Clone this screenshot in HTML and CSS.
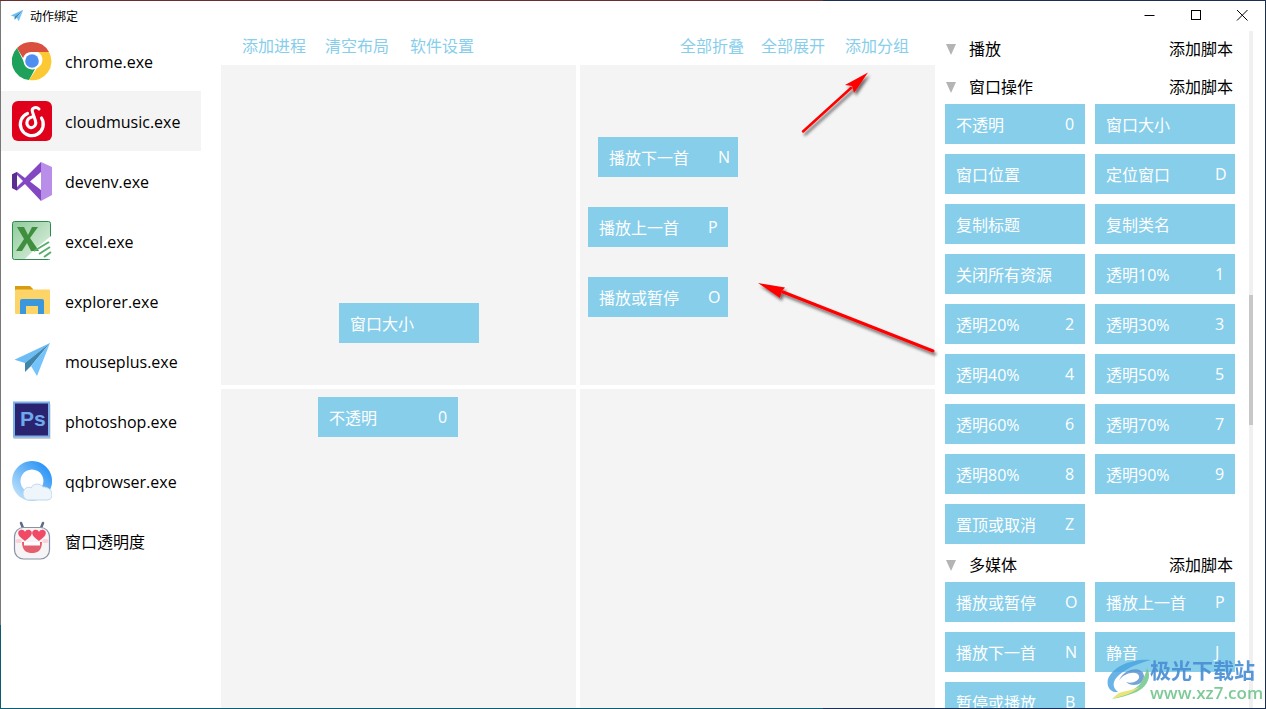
FILE: index.html
```html
<!DOCTYPE html>
<html lang="zh-CN">
  <head>
    <meta charset="UTF-8" />
    <title>动作绑定</title>
    <link rel="stylesheet" href="styles.css">
  </head>
  <body>
    <div class="window">
      <!-- Title bar -->
      <div class="titlebar">
        <div class="title">
          <svg class="title-icon" viewBox="0 0 40 40">
            <path d="M38 2 2.500 18.700 13 22z" fill="#6cbcf5" />
            <path d="M38 2 13 22v9l6-6z" fill="#3f86ad" />
            <path d="M38 2 19 25l6 10z" fill="#74c4fb" />
          </svg>
          <span>动作绑定</span>
        </div>
        <div class="controls">
          <svg class="ctl" viewBox="0 0 46 30"><path d="M17.500 15.500h10" /></svg>
          <svg class="ctl" viewBox="0 0 46 30"><rect x="18.500" y="10.500" width="9" height="9" /></svg>
          <svg class="ctl" viewBox="0 0 46 30"><path d="M18 10l10.500 10.500M28.500 10 18 20.500" /></svg>
        </div>
      </div>

      <div class="main">
        <!-- Process list -->
        <div class="sidebar">
          <div class="proc">
            <svg class="proc-icon" viewBox="0 0 40 40">
              <path d="M20 1a19 19 0 0 1 17 10H20a9 9 0 0 0-9 6L5 7A19 19 0 0 1 20 1z" fill="#d9503f" />
              <path d="M5 7l7 14a9 9 0 0 0 11 7l-6 11A19 19 0 0 1 5 7z" fill="#1ea15b" />
              <path d="M37 11a19 19 0 0 1-20 28l8-12a9 9 0 0 0 1-16z" fill="#fcc934" />
              <circle cx="20" cy="20" r="8.500" fill="#fff" />
              <circle cx="20" cy="20" r="6.800" fill="#4f8ff0" />
            </svg>
            <span>chrome.exe</span>
          </div>
          <div class="proc active">
            <svg class="proc-icon" viewBox="0 0 40 40">
              <rect width="40" height="40" rx="6" fill="#e0001b" />
              <path d="M15.500 12.500A11.500 11.500 0 1 0 29.500 17" fill="none" stroke="#fff" stroke-width="3.200" stroke-linecap="round" />
              <path d="M27 8c-3-3-8-1-6.500 3l3 9c1.500 5-3.500 8-6.500 6-4-3-2-9 3-10" fill="none" stroke="#fff" stroke-width="3" stroke-linecap="round" />
            </svg>
            <span>cloudmusic.exe</span>
          </div>
          <div class="proc">
            <svg class="proc-icon" viewBox="0 0 40 40">
              <path d="M29 1l11 5v28l-11 6z" fill="#b88ee8" />
              <path d="M29 1 13 17 5 11 0 13.500V27l5 2.500 8-6.500 16 17V29L18 20.500 29 11z" fill="#8447c4" />
              <path d="M0 13.500 5 11v18.500L0 27z" fill="#5c2d91" />
              <path d="M5 14v12l6-6z" fill="#fff" />
            </svg>
            <span>devenv.exe</span>
          </div>
          <div class="proc">
            <svg class="proc-icon" viewBox="0 0 40 40">
              <defs>
                <linearGradient id="xl" x1="0" y1="0" x2="1" y2="1">
                  <stop offset="0" stop-color="#8fcb9b" />
                  <stop offset="1" stop-color="#e3f2e5" />
                </linearGradient>
              </defs>
              <rect x=".5" y=".5" width="38" height="38" rx="2" fill="url(#xl)" stroke="#2f8a4e" />
              <path d="M39 15v23H13l9-9z" fill="#fff" />
              <path d="M5 6h7l4 8 4-8h6l-8 11 9 13h-8l-4-8-5 8H4l8-12z" fill="#3f8f3f" />
              <path d="M22 30l15-9M27 33l11-7M32 36l7-5" stroke="#58ad6c" stroke-width="2" />
            </svg>
            <span>excel.exe</span>
          </div>
          <div class="proc">
            <svg class="proc-icon" viewBox="0 0 40 40">
              <path d="M3 10V5h15l3 3v2z" fill="#d89c10" />
              <rect x="3" y="8.500" width="35" height="24.500" rx="1" fill="#fdd468" />
              <path d="M8 33V20a2 2 0 0 1 2-2h20a2 2 0 0 1 2 2v13h-6v-8H14v8z" fill="#3a96dd" />
            </svg>
            <span>explorer.exe</span>
          </div>
          <div class="proc">
            <svg class="proc-icon" viewBox="0 0 40 40">
              <path d="M38 2 2.500 18.700 13 22z" fill="#6cbcf5" />
              <path d="M38 2 13 22v9l6-6z" fill="#3f86ad" />
              <path d="M38 2 19 25l6 10z" fill="#74c4fb" />
            </svg>
            <span>mouseplus.exe</span>
          </div>
          <div class="proc">
            <svg class="proc-icon" viewBox="0 0 40 40">
              <rect x="1.500" y="3" width="37" height="35" fill="#aaa" opacity=".6" />
              <rect x="2" y="1.500" width="35" height="34" fill="#2a2470" stroke="#7bb0e8" stroke-width="2" />
              <text x="8" y="25" class="ps-text">Ps</text>
            </svg>
            <span>photoshop.exe</span>
          </div>
          <div class="proc">
            <svg class="proc-icon" viewBox="0 0 40 40">
              <defs>
                <linearGradient id="qq" x1="1" y1="0" x2="0" y2="1">
                  <stop offset="0" stop-color="#0f85f5" />
                  <stop offset="1" stop-color="#d3ecfb" />
                </linearGradient>
              </defs>
              <path fill-rule="evenodd" d="M20 0a20 20 0 1 0 .1 0zM20 8.500a11.500 11.500 0 1 1-.1 0z" fill="url(#qq)" />
              <path d="M15 39a7 7 0 0 1-1-12c2-1 4-1 5 0 2-5 9-5 12-1 4 0 9 2 9 8 0 3-2 5-5 5z" fill="#eef6fc" stroke="#bfd9ee" />
            </svg>
            <span>qqbrowser.exe</span>
          </div>
          <div class="proc proc-cn">
            <svg class="proc-icon" viewBox="0 0 40 40">
              <path d="M11 7 9 2M29 7l2-5" stroke="#5d6b85" stroke-width="2.500" stroke-linecap="round" />
              <rect x="2.500" y="6.500" width="35" height="31.500" rx="9" fill="#f7f4f6" stroke="#8a92a8" stroke-width="1.200" />
              <ellipse cx="6.500" cy="20" rx="3" ry="2" fill="#fbd0d6" />
              <ellipse cx="33.500" cy="20" rx="3" ry="2" fill="#fbd0d6" />
              <path d="M13 20C9 17 5 14 6.500 10.500 8 8 12 8 13 11c1-3 5-3 6.500-.5C21 14 17 17 13 20zM27 20c-4-3-8-6-6.500-9.500C22 8 26 8 27 11c1-3 5-3 6.500-.5C35 14 31 17 27 20z" fill="#f04a67" />
              <path d="M10 21h20c0 9-5 11-10 11S10 30 10 21z" fill="#e5606f" />
              <path d="M12 21h16v3.500H12z" fill="#fff" />
            </svg>
            <span>窗口透明度</span>
          </div>
        </div>

        <!-- Board -->
        <div class="center">
          <div class="toolbar">
            <div class="tool-group left">
              <span>添加进程</span>
              <span>清空布局</span>
              <span>软件设置</span>
            </div>
            <div class="tool-group right">
              <span>全部折叠</span>
              <span>全部展开</span>
              <span>添加分组</span>
            </div>
          </div>
          <div class="board">
            <div class="cell">
              <div class="action at-size"><span>窗口大小</span></div>
            </div>
            <div class="cell">
              <div class="action at-next"><span>播放下一首</span><span>N</span></div>
              <div class="action at-prev"><span>播放上一首</span><span>P</span></div>
              <div class="action at-pause"><span>播放或暂停</span><span>O</span></div>
            </div>
            <div class="cell">
              <div class="action at-opaque"><span>不透明</span><span>0</span></div>
            </div>
            <div class="cell"></div>
          </div>
        </div>

        <!-- Script list -->
        <div class="panel">
          <div class="panel-list">
            <div class="group-head">
              <span class="tri"></span><span class="group-name">播放</span><span class="add">添加脚本</span>
            </div>
            <div class="group-items"></div>

            <div class="group-head">
              <span class="tri"></span><span class="group-name">窗口操作</span><span class="add">添加脚本</span>
            </div>
            <div class="group-items">
              <div class="action"><span>不透明</span><span>0</span></div>
              <div class="action"><span>窗口大小</span></div>
              <div class="action"><span>窗口位置</span></div>
              <div class="action"><span>定位窗口</span><span>D</span></div>
              <div class="action"><span>复制标题</span></div>
              <div class="action"><span>复制类名</span></div>
              <div class="action"><span>关闭所有资源</span></div>
              <div class="action"><span>透明10%</span><span>1</span></div>
              <div class="action"><span>透明20%</span><span>2</span></div>
              <div class="action"><span>透明30%</span><span>3</span></div>
              <div class="action"><span>透明40%</span><span>4</span></div>
              <div class="action"><span>透明50%</span><span>5</span></div>
              <div class="action"><span>透明60%</span><span>6</span></div>
              <div class="action"><span>透明70%</span><span>7</span></div>
              <div class="action"><span>透明80%</span><span>8</span></div>
              <div class="action"><span>透明90%</span><span>9</span></div>
              <div class="action"><span>置顶或取消</span><span>Z</span></div>
            </div>

            <div class="group-head">
              <span class="tri"></span><span class="group-name">多媒体</span><span class="add">添加脚本</span>
            </div>
            <div class="group-items">
              <div class="action"><span>播放或暂停</span><span>O</span></div>
              <div class="action"><span>播放上一首</span><span>P</span></div>
              <div class="action"><span>播放下一首</span><span>N</span></div>
              <div class="action"><span>静音</span><span>J</span></div>
              <div class="action"><span>暂停或播放</span><span>B</span></div>
            </div>
          </div>
          <div class="scroll-track"><div class="scroll-thumb"></div></div>
        </div>
      </div>

      <!-- Red arrows drawn on top of the screenshot -->
      <svg class="arrows" viewBox="0 0 1266 709">
        <defs>
          <filter id="shade" x="-20%" y="-20%" width="140%" height="140%">
            <feDropShadow dx="2" dy="3" stdDeviation="1.500" flood-color="#000" flood-opacity=".55" />
          </filter>
        </defs>
        <g filter="url(#shade)">
          <path d="M803 131.500 851 88" stroke="#f00" stroke-width="2.500" stroke-linecap="round" />
          <path d="M868 72.500 845 85l7 1 2 7z" fill="#f00" />
          <path d="M933 351 783 292" stroke="#f00" stroke-width="3" stroke-linecap="round" />
          <path d="M758 283 785 287.500 782 291 780 298z" fill="#f00" />
        </g>
      </svg>

      <!-- Watermark -->
      <div class="watermark">
        <svg class="wm-logo" viewBox="0 0 45 40">
          <path d="M44 1C26-1 6 7 1 20c-2 8 3 14 10 13C5 29 5 22 12 16 20 9 32 4 44 1z" fill="#4aa5e0" />
          <path d="M12 22c4-8 18-11 20-5 1 5-7 8-13 6 5 5 18 4 18-6C36 6 16 9 12 22z" fill="#5a92d0" />
          <path d="M40 9c6 10-2 21-13 25-8 3-15 5-22 6 12-5 25-9 30-18 2-4 4-8 5-13z" fill="#6cc58a" />
          <path d="M33 28c-7 6-17 9-28 12 3-3 6-6 10-7 6-1 12-3 18-5z" fill="#e6df5a" />
        </svg>
        <div class="wm-text">
          <div class="wm-cn">极光下载站</div>
          <div class="wm-url">www.xz7.com</div>
        </div>
      </div>
    </div>
  </body>
</html>
```

FILE: styles.css
```css
* {
  box-sizing: border-box;
}
html,
body {
  margin: 0;
  height: 100%;
  overflow: hidden;
}
body {
  font-family: "Open Sans", "Noto Sans CJK SC", sans-serif;
  font-size: 16px;
  color: #000;
  background: #fff;
}
.window {
  position: relative;
  width: 1266px;
  height: 709px;
  background: #fff;
  display: flex;
  flex-direction: column;
  overflow: hidden;
}
/* window frame, the desktop colours bleed through it */
.window::before {
  content: "";
  position: absolute;
  inset: 0;
  z-index: 5;
  pointer-events: none;
  background:
    linear-gradient(90deg, #6b2d2d 823px, #1b2f55 823px) top / 100% 1px no-repeat,
    linear-gradient(90deg, #0f5c72 823px, #1b2f55 823px) bottom / 100% 1px no-repeat,
    linear-gradient(#777 625px, #0f5c72 625px) left / 1px 100% no-repeat,
    linear-gradient(#1b2f55, #1b2f55) right / 1px 100% no-repeat;
}

/* title bar */
.titlebar {
  height: 31px;
  display: flex;
  justify-content: space-between;
  flex-shrink: 0;
}
.title {
  display: flex;
  align-items: center;
  padding-left: 10px;
  font-family: "Noto Sans CJK SC", sans-serif;
  font-size: 12px;
}
.title-icon {
  width: 14px;
  height: 14px;
  margin-right: 6px;
}
.controls {
  display: flex;
  padding-right: 1px;
}
.ctl {
  width: 46px;
  height: 30px;
  fill: none;
  stroke: #000;
  stroke-width: 1;
}

.main {
  flex: 1;
  display: flex;
  min-height: 0;
}

/* process list */
.sidebar {
  width: 201px;
  padding-left: 1px;
  flex-shrink: 0;
}
.proc {
  height: 60px;
  display: flex;
  align-items: center;
  padding-left: 11px;
}
.proc span {
  margin-top: 2px;
}
.proc-cn span {
  margin-top: 0;
}
.proc.active {
  background-color: #f4f4f4;
}
.proc-icon {
  width: 40px;
  height: 40px;
  margin-right: 13px;
  flex-shrink: 0;
}
.ps-text {
  font-family: "Liberation Sans", sans-serif;
  font-size: 21px;
  font-weight: bold;
  fill: #6fa8ec;
}

/* board */
.center {
  width: 714px;
  margin-left: 20px;
  flex-shrink: 0;
  display: flex;
  flex-direction: column;
}
.toolbar {
  height: 34px;
  flex-shrink: 0;
  display: flex;
  justify-content: space-between;
  align-items: center;
  padding: 0 26px 7px 21px;
  color: #87ceeb;
}
.tool-group {
  display: flex;
}
.tool-group.left {
  gap: 19px;
}
.tool-group.right {
  gap: 17px;
}
.tool-group.left span:last-child {
  margin-left: 2px;
}
.tool-group.right span:last-child {
  margin-left: 3px;
}
.board {
  display: grid;
  grid-template-columns: 355px 355px;
  grid-template-rows: 320px 320px;
  gap: 4px;
}
.cell {
  position: relative;
  background-color: #f4f4f4;
}
.action {
  width: 140px;
  height: 40px;
  padding-left: 11px;
  display: flex;
  align-items: center;
  background-color: #87ceeb;
  color: #fff;
}
.action span:first-child {
  flex: 1;
}
.action span:nth-child(2) {
  width: 20px;
}

.at-size,
.at-next,
.at-prev,
.at-pause,
.at-opaque {
  position: absolute;
}
.at-size {
  left: 118px;
  top: 238px;
}
.at-next {
  left: 18px;
  top: 72px;
}
.at-prev {
  left: 8px;
  top: 142px;
}
.at-pause {
  left: 8px;
  top: 212px;
}
.at-opaque {
  left: 97px;
  top: 8px;
}

/* script list */
.panel {
  flex: 1;
  display: flex;
  min-width: 0;
  margin-left: 10px;
  overflow: hidden;
}
.panel-list {
  width: 290px;
  padding-top: 7px;
  flex-shrink: 0;
}
.group-head {
  height: 22px;
  padding-bottom: 2px;
  display: flex;
  align-items: center;
}
.tri {
  width: 0;
  height: 0;
  margin: 3px 0 0 1px;
  border-left: 5.5px solid transparent;
  border-right: 5.5px solid transparent;
  border-top: 11px solid #b4b4b4;
}
.group-name {
  margin-left: 13px;
}
.add {
  margin-left: auto;
  margin-right: 2px;
}
.group-items {
  display: grid;
  grid-template-columns: 140px 140px;
  gap: 10px;
  padding: 6px 0 10px;
}
.scroll-track {
  width: 4px;
  margin-left: 14px;
  background-color: #f0f0f0;
  padding-top: 264px;
}
.scroll-thumb {
  height: 130px;
  background-color: #c8c8c8;
}

/* overlays */
.arrows {
  position: absolute;
  left: 0;
  top: 0;
  width: 1266px;
  height: 709px;
  pointer-events: none;
}
.watermark {
  position: absolute;
  left: 1107px;
  top: 655px;
  display: flex;
  align-items: flex-start;
  opacity: .92;
}
.wm-logo {
  width: 45px;
  height: 40px;
  margin-top: 4px;
  opacity: .9;
}
.wm-text {
  margin-left: -2px;
}
.wm-cn {
  font-family: "Noto Sans CJK SC", sans-serif;
  font-size: 21px;
  font-weight: 700;
  line-height: 28px;
  color: #4a8fd4;
}
.wm-url {
  font-family: "Open Sans", sans-serif;
  font-size: 17px;
  font-weight: 600;
  line-height: 20px;
  color: #72c68f;
}
```
